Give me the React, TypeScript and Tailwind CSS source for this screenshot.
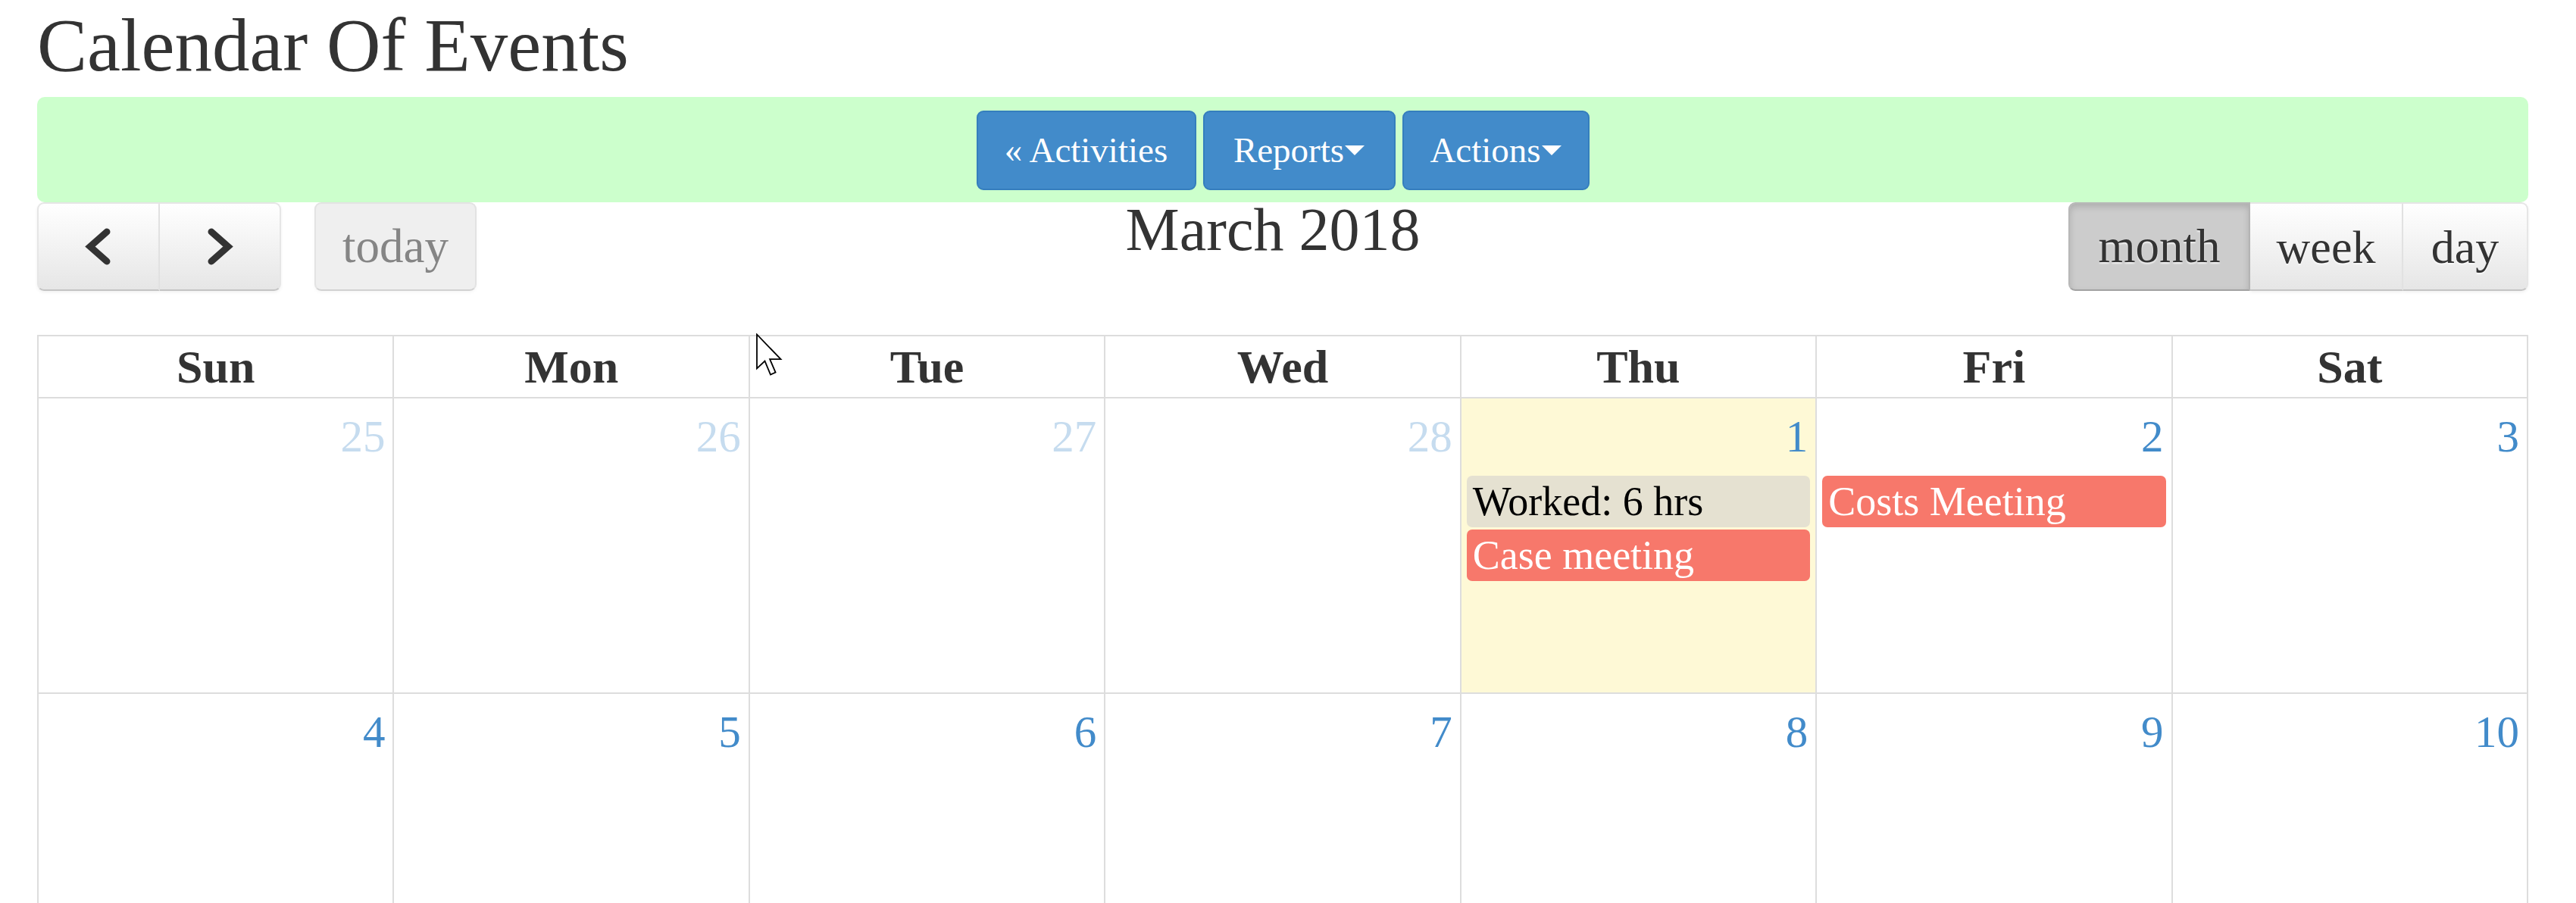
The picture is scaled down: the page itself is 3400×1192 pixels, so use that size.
import React from "react";

type CalEvent = { title: string; className: string };

const events: Record<string, CalEvent[]> = {
  "3-1": [
    { title: "Worked: 6 hrs", className: "bg-[#e5e1d1] text-black" },
    { title: "Case meeting", className: "bg-[#f7786b] text-white" },
  ],
  "3-2": [{ title: "Costs Meeting", className: "bg-[#f7786b] text-white" }],
};

const dayNames = ["Sun", "Mon", "Tue", "Wed", "Thu", "Fri", "Sat"];

// March 2018 starts on a Thursday, so the grid opens on Feb 25.
function buildWeeks(count: number) {
  const weeks: { day: number; month: number }[][] = [];
  let day = 25;
  let month = 2;
  for (let w = 0; w < count; w++) {
    const row = [];
    for (let d = 0; d < 7; d++) {
      row.push({ day, month });
      day++;
      if (month === 2 && day > 28) {
        day = 1;
        month = 3;
      } else if (month === 3 && day > 31) {
        day = 1;
        month = 4;
      }
    }
    weeks.push(row);
  }
  return weeks;
}

const navBtn =
  "flex items-center justify-center h-[117px] border-2 border-[#e6e6e6] border-b-[#c4c4c4] bg-linear-to-b from-white to-[#e6e6e6] text-[#333] text-[62px] leading-none [text-shadow:0_2px_2px_rgba(255,255,255,0.75)] shadow-[0_2px_4px_rgba(0,0,0,0.06)]";

function Chevron({ dir }: { dir: "left" | "right" }) {
  return (
    <svg width="36" height="49" viewBox="0 0 36 49">
      <polyline
        points={dir === "left" ? "29,5 7,24.5 29,44" : "7,5 29,24.5 7,44"}
        fill="none"
        stroke="#333"
        strokeWidth="9"
        strokeLinecap="round"
        strokeLinejoin="miter"
      />
    </svg>
  );
}

function Caret() {
  return (
    <span className="ml-[1px] inline-block h-0 w-0 border-x-[13px] border-t-[13px] border-x-transparent border-t-white align-middle" />
  );
}

function Cursor() {
  return (
    <svg
      className="absolute left-[997px] top-[440px]"
      width="37"
      height="57"
      viewBox="0 0 12 19"
    >
      <path
        d="M0.5 0.5 L0.5 15.5 L4 12.2 L6.5 18.2 L8.7 17.2 L6.2 11.4 L11 11.4 Z"
        fill="#fff"
        stroke="#000"
        strokeWidth="0.6"
        strokeLinejoin="miter"
      />
    </svg>
  );
}

export default function App() {
  const weeks = buildWeeks(2);

  return (
    <div className="relative h-screen overflow-hidden bg-white font-['Liberation_Serif',serif] text-[#333]">
      <div className="ml-[49px] w-[3288px]">
        <h1 className="mt-[10px] text-[99px] font-normal leading-none">Calendar Of Events</h1>

        <div className="mt-[19px] flex h-[139px] items-center justify-center gap-[9px] rounded-[10px] bg-[#ccffcc] pt-[2px]">
          <button className="flex h-[105px] w-[290px] items-center justify-center rounded-[9px] border-2 border-[#357ebd] bg-[#428bca] text-[47px] leading-none text-white">
            « Activities
          </button>
          <button className="flex h-[105px] w-[254px] items-center justify-center rounded-[9px] border-2 border-[#357ebd] bg-[#428bca] text-[47px] leading-none text-white">
            Reports
            <Caret />
          </button>
          <button className="flex h-[105px] w-[247px] items-center justify-center rounded-[9px] border-2 border-[#357ebd] bg-[#428bca] text-[47px] leading-none text-white">
            Actions
            <Caret />
          </button>
        </div>

        <div className="flex h-[117px] items-start">
          <div className="flex w-[581px] gap-[44px]">
            <div className="flex">
              <button className={`${navBtn} w-[162px] rounded-l-[9px]`}>
                <Chevron dir="left" />
              </button>
              <button className={`${navBtn} w-[160px] rounded-r-[9px] border-l-0`}>
                <Chevron dir="right" />
              </button>
            </div>
            <button className="flex h-[117px] w-[214px] items-center justify-center rounded-[9px] border-2 border-[#e3e3e3] border-b-[#d2d2d2] bg-[#efefef] text-[63px] leading-none text-[#858585] shadow-[0_2px_4px_rgba(0,0,0,0.04)]">
              today
            </button>
          </div>
          <div className="flex-1 text-center">
            <h2 className="mt-[-4px] text-[80px] font-normal leading-none">March 2018</h2>
          </div>
          <div className="flex w-[607px]">
            <button className="flex h-[117px] w-[240px] items-center justify-center rounded-l-[9px] border-2 border-[#b8b8b8] border-b-[#a2a2a2] bg-[#cccccc] text-[63px] leading-none text-[#333] shadow-[inset_0_4px_8px_rgba(0,0,0,0.15)] [text-shadow:0_2px_2px_rgba(255,255,255,0.75)]">
              month
            </button>
            <button className={`${navBtn} w-[202px] border-l-0`}>week</button>
            <button className={`${navBtn} w-[165px] rounded-r-[9px] border-l-0`}>day</button>
          </div>
        </div>

        <div className="mt-[58px] border-l-2 border-t-2 border-[#dddddd]">
          <div className="grid grid-cols-7">
            {dayNames.map((name) => (
              <div
                key={name}
                className="flex h-[82px] items-center justify-center border-b-2 border-r-2 border-[#dddddd] text-[62px] font-bold leading-none"
              >
                {name}
              </div>
            ))}
          </div>

          {weeks.map((week, wi) => (
            <div key={wi} className="grid grid-cols-7">
              {week.map(({ day, month }) => {
                const key = `${month}-${day}`;
                const isToday = month === 3 && day === 1;
                const other = month !== 3;
                return (
                  <div
                    key={key}
                    className={`h-[390px] border-b-2 border-r-2 border-[#dddddd] ${isToday ? "bg-[#fef9d6]" : "bg-white"}`}
                  >
                    <div
                      className={`pr-[10px] pt-[21px] text-right text-[59px] leading-none ${other ? "text-[#c6dcef]" : "text-[#428bca]"}`}
                    >
                      {day}
                    </div>
                    <div className="mt-[22px] flex flex-col gap-[3px] px-[7px]">
                      {(events[key] || []).map((ev) => (
                        <div
                          key={ev.title}
                          className={`flex h-[68px] items-center rounded-[7px] px-[8px] text-[54px] leading-none ${ev.className}`}
                        >
                          {ev.title}
                        </div>
                      ))}
                    </div>
                  </div>
                );
              })}
            </div>
          ))}
        </div>
      </div>

      <Cursor />
    </div>
  );
}
